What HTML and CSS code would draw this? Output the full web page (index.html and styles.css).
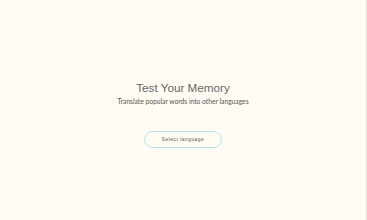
FILE: index.html
```html
<!DOCTYPE html>
<html>
<head>
  <meta charset="UTF-8">
  <meta name="viewport" content="width=device-width, initial-scale=1.0">
  <title>Test Your Memory</title>
  <link rel="stylesheet" href="styles.css">
</head>
<body>
  <div class="page">
    <div class="intro">
      <h1 class="title">Test Your Memory</h1>
      <p class="subtitle">Translate popular words into other languages</p>
      <button class="select-button">Select language</button>
    </div>
  </div>
</body>
</html>
```

FILE: styles.css
```css
body {
  margin: 0;
  background-color: #fffcf4;
  font-family: "Liberation Sans", Arial, sans-serif;
}
.page {
  height: 220px;
  border-right: 1px solid #e2e0da;
  box-sizing: border-box;
  display: flex;
  justify-content: center;
}
.intro {
  display: flex;
  flex-direction: column;
  align-items: center;
  padding-top: 81px;
}
.title {
  margin: 0;
  font-size: 11.7px;
  font-weight: normal;
  color: #666;
  line-height: 14px;
}
.subtitle {
  margin: 2px 0 0;
  font-family: Lato, "Open Sans", sans-serif;
  font-size: 6.7px;
  color: #555;
  line-height: 9px;
}
.select-button {
  margin-top: 25px;
  width: 78px;
  height: 17px;
  border: 1px solid #b3e2ef;
  border-radius: 9px;
  background: #fffcf4;
  font-family: "Liberation Sans", Arial, sans-serif;
  font-size: 4.9px;
  letter-spacing: 0.5px;
  color: #555;
  padding: 0;
}
```
